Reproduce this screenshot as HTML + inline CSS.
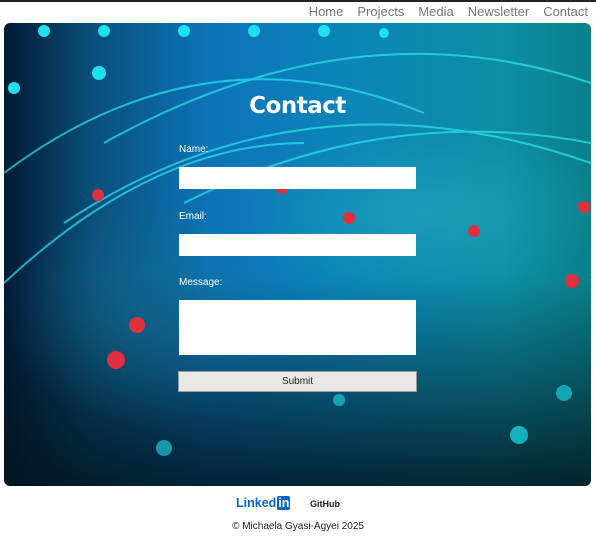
<!DOCTYPE html>
<html><head><style>
*{margin:0;padding:0;box-sizing:border-box}
body{width:596px;height:536px;background:#fff;font-family:"Liberation Sans",Arial,sans-serif;position:relative;overflow:hidden}
.top{position:absolute;left:0;top:0;width:596px;height:2px;background:#222}
nav{position:absolute;top:4px;right:8px;font-size:13px;color:#777}
nav span{margin-left:14px}
.hero{position:absolute;left:4px;top:23px;width:587px;height:463px;border-radius:6px;overflow:hidden;
background:
radial-gradient(ellipse 260px 120px at 420px 190px,rgba(40,170,190,.55),transparent 70%),
radial-gradient(ellipse 200px 160px at 140px 290px,rgba(20,110,140,.5),transparent 70%),
linear-gradient(180deg,rgba(0,0,0,0) 0,rgba(0,0,0,0) 55%,rgba(2,20,30,.85) 100%),
linear-gradient(90deg,#021a35 0,#0a4f7a 15%,#0c74b8 35%,#0b86b8 60%,#0d8fa5 85%,#0a7f8a 100%);}
.hero svg{position:absolute;left:0;top:0}
h1{position:absolute;left:0;width:587px;top:70px;text-align:center;color:#fff;font-size:23px;font-weight:bold;font-family:"DejaVu Sans",sans-serif;letter-spacing:-0.5px}
label{position:absolute;left:179px;color:#fff;font-size:10px}
.in{position:absolute;left:179px;width:237px;background:#fff}
.btn{position:absolute;left:178px;width:239px;height:21px;background:#e9e8e6;border:1px solid #999;font-size:10px;text-align:center;line-height:19px;color:#222}
.li{position:absolute;left:236px;top:496px;font-size:12.5px;font-weight:bold;color:#0a66c2}
.li b{background:#0a66c2;color:#fff;padding:0 1px;border-radius:2px;margin-left:1px}
.gh{position:absolute;left:310px;top:499px;font-size:9px;font-weight:bold;color:#222}
.cp{position:absolute;left:0;width:596px;top:521px;text-align:center;font-size:10px;color:#222}
</style></head><body>
<div class="top"></div>
<nav><span>Home</span><span>Projects</span><span>Media</span><span>Newsletter</span><span>Contact</span></nav>
<div class="hero">
<svg width="587" height="463">
<g fill="none" stroke="#2ee6f0" stroke-width="2" opacity=".7">
<path d="M0 150 Q200 0 420 90"/><path d="M60 200 Q300 40 587 140"/><path d="M0 260 Q150 120 300 120"/>
<path d="M100 120 Q350 -20 587 60"/><path d="M180 180 Q380 80 587 120"/>
</g>
<g fill="#1ee0ee">
<circle cx="40" cy="8" r="6"/><circle cx="100" cy="8" r="6"/><circle cx="180" cy="8" r="6"/><circle cx="250" cy="8" r="6"/><circle cx="320" cy="8" r="6"/><circle cx="380" cy="10" r="5"/>
<circle cx="10" cy="65" r="6"/><circle cx="95" cy="50" r="7"/><circle cx="515" cy="412" r="9" opacity=".7"/><circle cx="560" cy="370" r="8" opacity=".6"/><circle cx="160" cy="425" r="8" opacity=".6"/><circle cx="335" cy="377" r="6" opacity=".6"/>
</g>
<g fill="#e03040"><circle cx="94" cy="172" r="6"/><circle cx="133" cy="302" r="8"/><circle cx="112" cy="337" r="9"/><circle cx="345" cy="195" r="6"/><circle cx="470" cy="208" r="6"/><circle cx="568" cy="258" r="7"/><circle cx="278" cy="165" r="6"/><circle cx="580" cy="184" r="6"/></g>
</svg>
<h1>Contact</h1>
</div>
<label style="top:144px">Name:</label>
<div class="in" style="top:167px;height:22px"></div>
<label style="top:211px">Email:</label>
<div class="in" style="top:234px;height:22px"></div>
<label style="top:277px">Message:</label>
<div class="in" style="top:300px;height:55px"></div>
<div class="btn" style="top:371px">Submit</div>
<div class="li">Linked<b>in</b></div>
<div class="gh">GitHub</div>
<div class="cp">© Michaela Gyasi-Agyei 2025</div>
</body></html>
